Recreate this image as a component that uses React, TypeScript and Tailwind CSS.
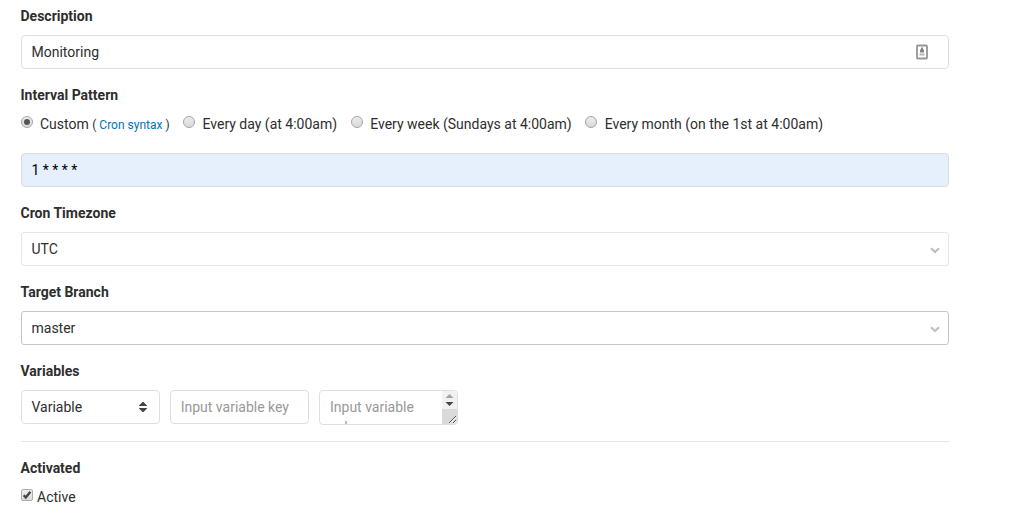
import type { ReactNode } from "react";

function Label({ children }: { children: ReactNode }) {
  return <div className="-ml-[0.5px] mb-[9px] h-5 font-bold leading-5">{children}</div>;
}

function Radio({ checked, id }: { checked?: boolean; id: string }) {
  return (
    <svg className="mb-[5px] h-[14px] w-[14px] shrink-0" viewBox="0 0 14 14" role="radio" aria-checked={!!checked}>
      <defs>
        <linearGradient id={id} x1="0" y1="0" x2="0" y2="1">
          <stop offset="0" stopColor="#ededed" />
          <stop offset="1" stopColor="#d9d9d9" />
        </linearGradient>
      </defs>
      <circle cx="7" cy="7" r="5.5" fill={`url(#${id})`} stroke="#a6a6a6" />
      {checked && <circle cx="7" cy="7" r="3" fill="#555" />}
    </svg>
  );
}

function Chevron() {
  return (
    <svg className="mt-[2px] h-[7px] w-[10px]" viewBox="0 0 10 7" fill="none" stroke="#bfbfbf" strokeWidth="2.2">
      <path d="M1 1.2 5 5 9 1.2" />
    </svg>
  );
}

export default function App() {
  return (
    <main className="h-[527px] w-[1009px] overflow-hidden bg-white pl-[21px] pt-[6px] font-['Roboto',sans-serif] text-[14px] leading-5 text-[#2e2e2e]">
      <form className="w-[928px]">
        <Label>Description</Label>
        <div className="mb-4 flex h-[34px] items-center justify-between rounded-[4px] border border-[#dfdfdf] pl-[9.5px] pr-5">
          <span>Monitoring</span>
          <svg className="h-4 w-3" viewBox="0 0 12 16">
            <rect x="1" y="1.5" width="10" height="13" rx=".8" fill="#fff" stroke="#969696" strokeWidth="1.8" />
            <path d="M5 3.5h2v2h1v3H4v-3h1Z" fill="#858585" />
            <path d="M3.5 10.5h5" stroke="#b5b5b5" strokeWidth="2" />
          </svg>
        </div>

        <Label>Interval Pattern</Label>
        <div className="-mt-[9px] mb-[19px] flex h-[29px] items-end whitespace-nowrap">
          <div className="-ml-px flex w-[162px] items-end">
            <Radio checked id="r-custom" />
            <span className="ml-[6px]">Custom</span>
            <span className="-mb-px ml-[3.5px] text-[12px]">( <span className="text-[#0072bd]">Cron syntax</span> )</span>
          </div>
          <div className="flex w-[168px] items-end">
            <Radio id="r-day" />
            <span className="ml-[6.5px]">Every day (at 4:00am)</span>
          </div>
          <div className="flex w-[234px] items-end">
            <Radio id="r-week" />
            <span className="ml-[6.2px]">Every week (Sundays at 4:00am)</span>
          </div>
          <div className="flex items-end">
            <Radio id="r-month" />
            <span className="ml-[6.7px]">Every month (on the 1st at 4:00am)</span>
          </div>
        </div>
        <div className="mb-4 flex h-[34px] items-center rounded-[4px] border border-[#dcdcdc] bg-[#e6f0fc] pl-[9.5px] text-black">1 * * * *</div>

        <Label>Cron Timezone</Label>
        <div className="mb-4 flex h-[34px] items-center justify-between rounded-[3px] border border-[#e5e5e5] pl-[9.5px] pr-2">
          <span>UTC</span>
          <Chevron />
        </div>

        <Label>Target Branch</Label>
        <div className="mb-4 flex h-[34px] items-center justify-between rounded-[3px] border border-[#c6c6c6] pl-[9.5px] pr-2">
          <span>master</span>
          <Chevron />
        </div>

        <Label>Variables</Label>
        <div className="flex h-[51px] items-start gap-[10px]">
          <div className="flex h-[34px] w-[139px] items-center justify-between rounded-[4px] border border-[#dfdfdf] pl-[9.5px] pr-3">
            <span>Variable</span>
            <svg className="h-[10px] w-2" viewBox="0 0 8 10" fill="#444">
              <path d="M3.5 0h1L8 3.5V4H0v-.5ZM3.5 10h1L8 6.5V6H0v.5Z" />
            </svg>
          </div>
          <div className="flex h-[34px] w-[139px] items-center rounded-[4px] border border-[#dfdfdf] pl-[9.7px] text-[#999]">Input variable key</div>
          <div className="flex h-[35px] w-[139px] justify-between overflow-hidden rounded-[4px] border border-[#dfdfdf] pl-[10px]">
            <div className="w-[90px] pt-[6px] text-[#999]">Input variable value</div>
            <svg className="h-[33px] w-[15px]" viewBox="0 0 15 33">
              <path fill="#f1f1f1" d="M0 0h15v18H0Z" />
              <path fill="#dadada" d="M0 18h15v15H0Z" />
              <path fill="#a3a3a3" d="m7.5 3 4 4h-8Z" />
              <path fill="#444" d="m7.5 15 4-4h-8Z" />
              <path d="m7 32 7-7M11 32l3-3" stroke="#fff" strokeWidth="1" transform="translate(.7 .7)" />
              <path d="m7 32 7-7M11 32l3-3" stroke="#555" strokeWidth="1" />
            </svg>
          </div>
        </div>
        <div className="mb-4 h-px bg-[#e5e5e5]" />

        <Label>Activated</Label>
        <div className="flex h-5 items-center">
          <svg className="mb-1 h-3 w-3" viewBox="0 0 12 12">
            <defs>
              <linearGradient id="active-fill" x1="0" y1="0" x2="0" y2="1">
                <stop offset="0" stopColor="#ededed" />
                <stop offset="1" stopColor="#dadada" />
              </linearGradient>
            </defs>
            <rect x=".5" y=".5" width="11" height="11" rx="1.5" fill="url(#active-fill)" stroke="#adadad" />
            <path d="m2.7 6.2 2.1 2.3L9.4 2.8" fill="none" stroke="#444" strokeWidth="2.4" />
          </svg>
          <span className="ml-1">Active</span>
        </div>
      </form>
    </main>
  );
}
